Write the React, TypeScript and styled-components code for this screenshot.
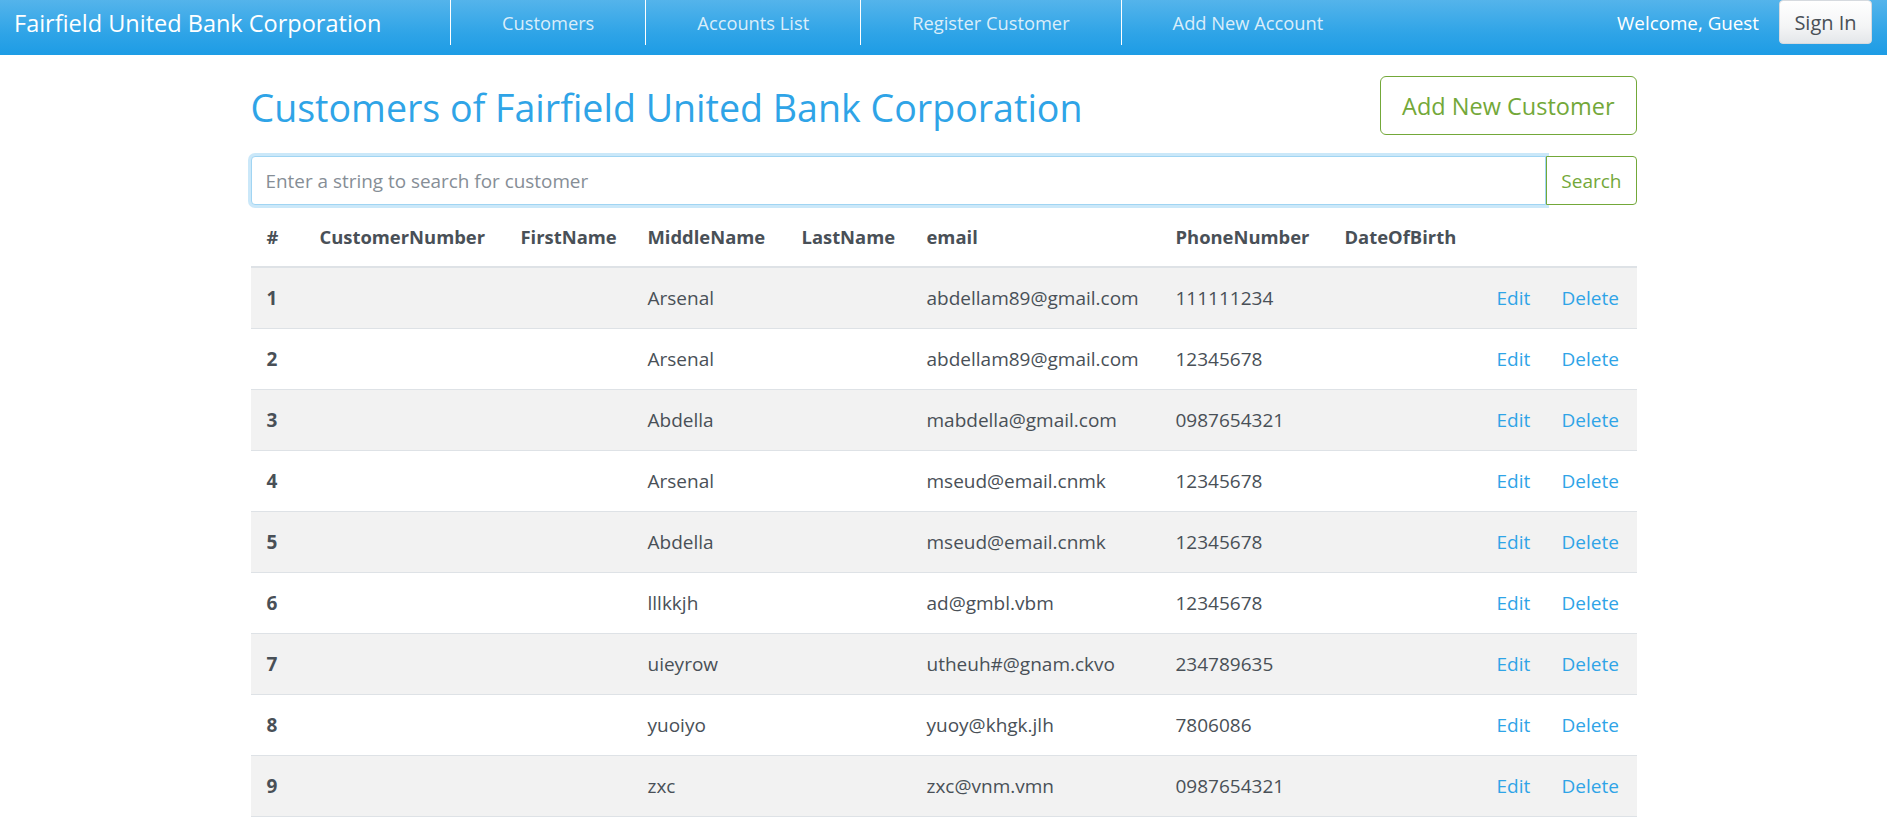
import React from "react";
import styled, { createGlobalStyle } from "styled-components";

const GlobalStyle = createGlobalStyle`
  body {
    margin: 0;
    font-family: "Open Sans", "Noto Sans", sans-serif;
    color: #495057;
    background: #fff;
  }
  * { box-sizing: border-box; }
`;

const Navbar = styled.nav`
  height: 55px;
  display: flex;
  align-items: flex-start;
  background-image: linear-gradient(#54b4eb, #2fa4e7 60%, #1d9ce5);
  color: #fff;
`;

const Brand = styled.a`
  flex: 0 0 450px;
  height: 45px;
  display: flex;
  align-items: center;
  padding-left: 14px;
  font-size: 23.5px;
  color: #fff;
`;

const NavLink = styled.a`
  height: 45px;
  display: flex;
  align-items: center;
  padding: 0 51px;
  border-left: 1px solid #fff;
  font-size: 18.3px;
  color: rgba(255, 255, 255, 0.82);
`;

const NavRight = styled.div`
  margin-left: auto;
  display: flex;
  align-items: center;
  height: 45px;
  padding-right: 15px;
`;

const Welcome = styled.span`
  font-size: 18.8px;
  color: #fff;
  margin-right: 20px;
`;

const SignIn = styled.button`
  width: 93px;
  height: 44px;
  margin-top: -1px;
  border: 1px solid #d6dadf;
  border-radius: 4px;
  background-image: linear-gradient(#ffffff, #f4f5f6 60%, #e4e7ea);
  color: #495057;
  font-family: inherit;
  font-size: 20px;
`;

const Container = styled.main`
  width: 1386px;
  margin: 0 auto;
`;

const Header = styled.div`
  display: flex;
  align-items: center;
  justify-content: space-between;
  margin-top: 21px;
  height: 59px;
`;

const Title = styled.h1`
  margin: 0;
  padding-top: 4px;
  font-size: 37.6px;
  font-weight: 400;
  color: #2fa4e7;
`;

const OutlineButton = styled.button<{ $size: "lg" | "sm" }>`
  background: #fff;
  color: #73a839;
  border: 1px solid #73a839;
  font-family: inherit;
  font-size: ${({ $size }) => ($size === "lg" ? "23.5px" : "19px")};
  height: ${({ $size }) => ($size === "lg" ? "59px" : "49px")};
  padding: ${({ $size }) => ($size === "lg" ? "0 21px" : "0 14px")};
  border-radius: ${({ $size }) => ($size === "lg" ? "6px" : "0 4px 4px 0")};
`;

const SearchGroup = styled.div`
  display: flex;
  margin-top: 21px;
  height: 49px;
`;

const SearchInput = styled.input`
  flex: 1;
  height: 49px;
  padding: 0 14px;
  border: 1px solid #a1d5f3;
  border-radius: 4px 0 0 4px;
  box-shadow: 0 0 0 3px rgba(47, 164, 231, 0.25);
  font-family: inherit;
  font-size: 18.9px;
  color: #495057;
  outline: none;
  &::placeholder {
    color: #868e96;
  }
`;

const Table = styled.table`
  width: 100%;
  margin-top: 6px;
  border-collapse: collapse;
  table-layout: fixed;
  font-size: 19px;
`;

const Col = styled.col<{ $w?: number }>`
  width: ${({ $w }) => ($w ? `${$w}px` : "auto")};
`;

const Th = styled.th`
  height: 56px;
  padding: 0 16px 4px;
  text-align: left;
  font-size: 18.4px;
  font-weight: 700;
  border-bottom: 2px solid #dee2e6;
  white-space: nowrap;
`;

const Row = styled.tr`
  &:nth-child(odd) {
    background: #f2f2f2;
  }
`;

const Td = styled.td<{ $head?: boolean }>`
  height: 61px;
  padding: 0 16px;
  border-bottom: 1px solid #dee2e6;
  font-weight: ${({ $head }) => ($head ? 700 : 400)};
  white-space: nowrap;
`;

const Link = styled.a`
  color: #2fa4e7;
  text-decoration: none;
`;

const columns = [
  { label: "#", w: 53 },
  { label: "CustomerNumber", w: 201 },
  { label: "FirstName", w: 127 },
  { label: "MiddleName", w: 154 },
  { label: "LastName", w: 125 },
  { label: "email", w: 249 },
  { label: "PhoneNumber", w: 169 },
  { label: "DateOfBirth", w: 152 },
  { label: "", w: 65 },
  { label: "" },
];

const customers = [
  { middle: "Arsenal", email: "abdellam89@gmail.com", phone: "111111234" },
  { middle: "Arsenal", email: "abdellam89@gmail.com", phone: "12345678" },
  { middle: "Abdella", email: "mabdella@gmail.com", phone: "0987654321" },
  { middle: "Arsenal", email: "mseud@email.cnmk", phone: "12345678" },
  { middle: "Abdella", email: "mseud@email.cnmk", phone: "12345678" },
  { middle: "lllkkjh", email: "ad@gmbl.vbm", phone: "12345678" },
  { middle: "uieyrow", email: "utheuh#@gnam.ckvo", phone: "234789635" },
  { middle: "yuoiyo", email: "yuoy@khgk.jlh", phone: "7806086" },
  { middle: "zxc", email: "zxc@vnm.vmn", phone: "0987654321" },
];

export default function App() {
  return (
    <>
      <GlobalStyle />
      <Navbar>
        <Brand>Fairfield United Bank Corporation</Brand>
        <NavLink>Customers</NavLink>
        <NavLink>Accounts List</NavLink>
        <NavLink>Register Customer</NavLink>
        <NavLink>Add New Account</NavLink>
        <NavRight>
          <Welcome>Welcome, Guest</Welcome>
          <SignIn>Sign In</SignIn>
        </NavRight>
      </Navbar>

      <Container>
        <Header>
          <Title>Customers of Fairfield United Bank Corporation</Title>
          <OutlineButton $size="lg">Add New Customer</OutlineButton>
        </Header>

        <SearchGroup>
          <SearchInput placeholder="Enter a string to search for customer" />
          <OutlineButton $size="sm">Search</OutlineButton>
        </SearchGroup>

        <Table>
          <colgroup>
            {columns.map((c, i) => (
              <Col key={i} $w={c.w} />
            ))}
          </colgroup>
          <thead>
            <tr>
              {columns.map((c, i) => (
                <Th key={i}>{c.label}</Th>
              ))}
            </tr>
          </thead>
          <tbody>
            {customers.map((c, i) => (
              <Row key={i}>
                <Td $head>{i + 1}</Td>
                <Td />
                <Td />
                <Td>{c.middle}</Td>
                <Td />
                <Td>{c.email}</Td>
                <Td>{c.phone}</Td>
                <Td />
                <Td>
                  <Link href="#">Edit</Link>
                </Td>
                <Td>
                  <Link href="#">Delete</Link>
                </Td>
              </Row>
            ))}
          </tbody>
        </Table>
      </Container>
    </>
  );
}
